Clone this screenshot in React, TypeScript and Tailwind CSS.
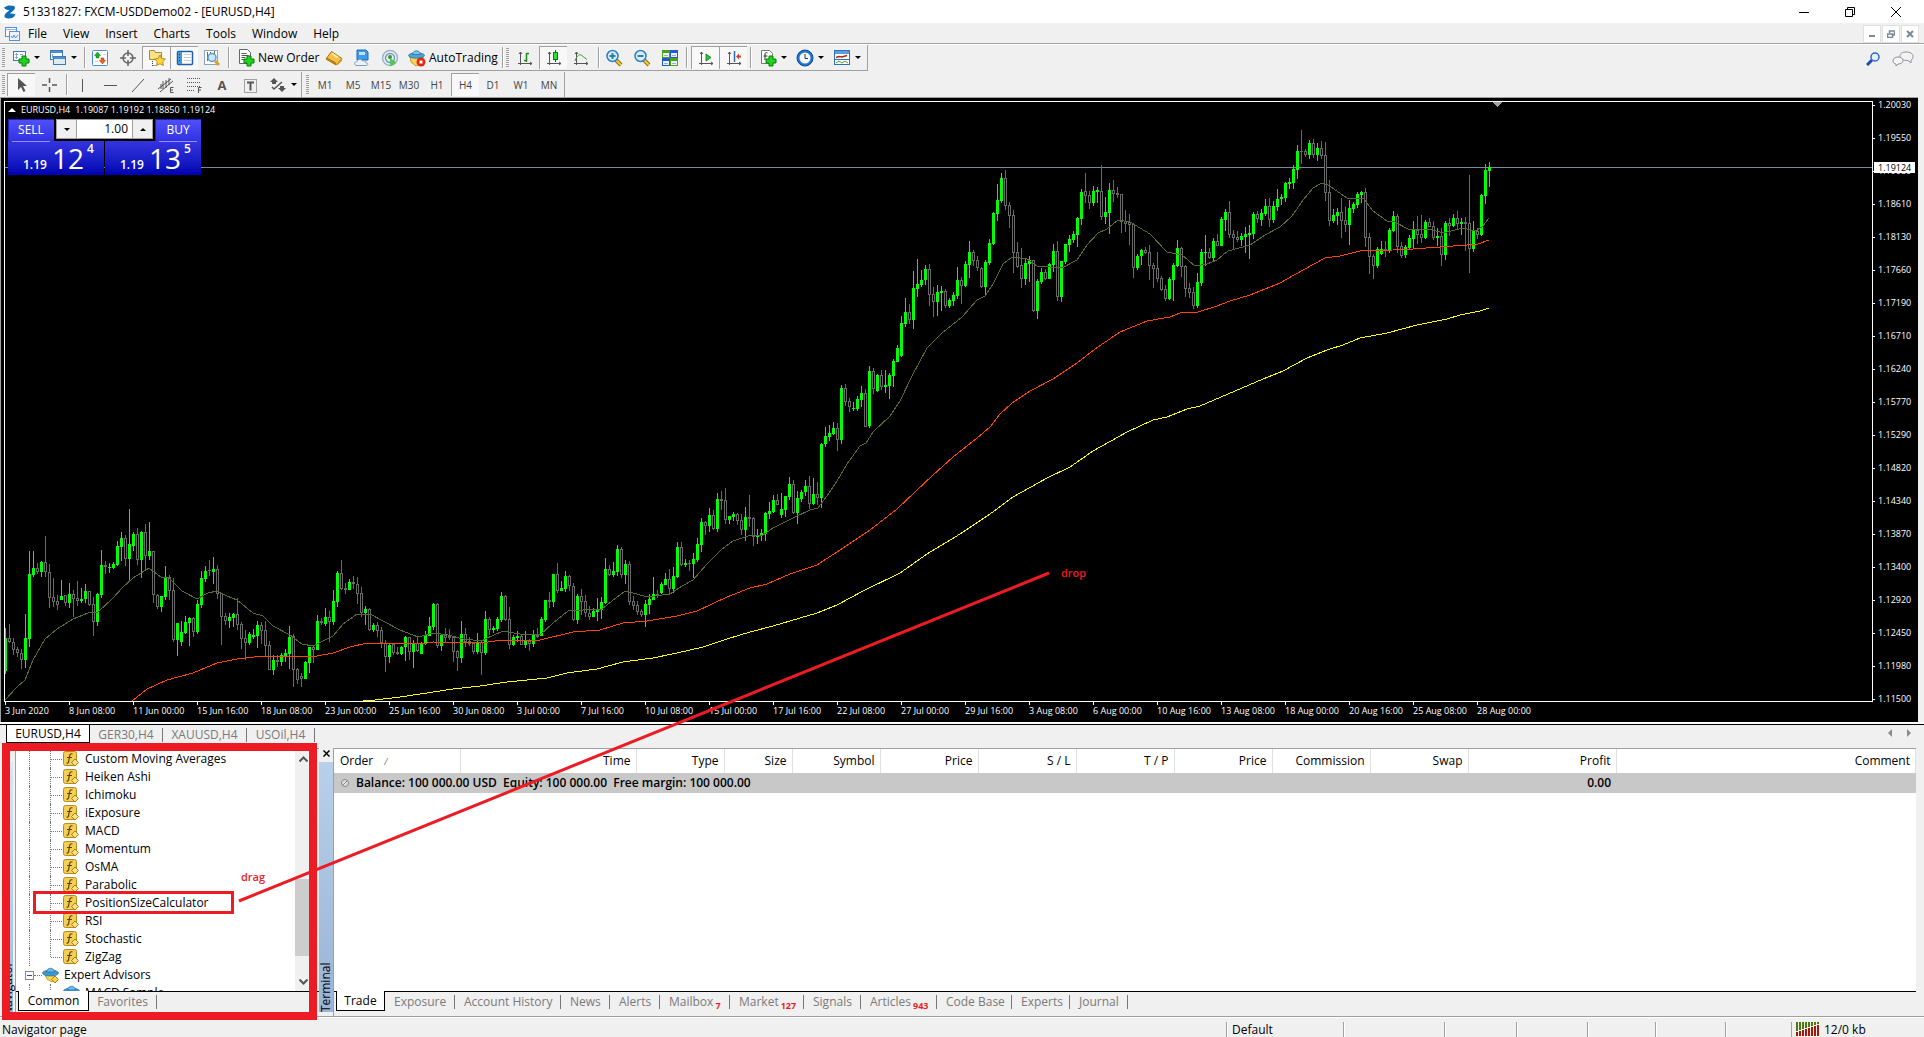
import { ReactNode } from 'react';
import { clsx } from 'clsx';

// [high, low, open, close] measured from the top of the plot area's frame
const candles = [
  [628,674,671,638],[624,643,638,642],[638,655,642,650],[647,657,649,653],[649,669,653,660],[614,668,660,638],
  [551,647,639,574],[551,577,575,568],[563,574,568,572],[561,577,572,562],[536,577,562,572],[564,608,572,598],
  [578,607,597,602],[595,610,601,605],[580,600,600,596],[595,606,595,603],[583,608,603,594],[590,617,594,599],
  [581,606,598,601],[588,603,601,599],[584,603,599,591],[591,606,591,605],[597,636,604,622],[593,626,622,594],
  [550,598,595,565],[561,574,565,567],[563,573,568,567],[562,569,568,564],[541,566,565,546],[532,561,547,538],
  [535,566,538,559],[509,580,559,544],[532,551,546,534],[528,565,534,560],[531,578,560,532],[524,570,532,556],
  [522,560,556,551],[551,603,551,595],[594,609,595,607],[596,612,607,596],[566,600,597,577],[575,600,577,591],
  [578,642,590,640],[623,656,640,623],[621,646,642,632],[616,634,633,622],[617,646,623,618],[617,637,618,632],
  [600,634,632,604],[571,608,605,578],[566,582,579,571],[560,576,570,571],[557,584,572,569],[565,599,569,594],
  [593,645,593,617],[613,625,616,621],[613,628,621,617],[613,627,618,614],[598,630,614,625],[622,649,624,639],
  [630,660,638,643],[632,645,643,634],[629,639,637,635],[621,648,636,625],[622,644,625,631],[621,656,630,646],
  [641,670,645,670],[655,675,670,660],[655,667,660,662],[653,666,662,655],[649,662,657,653],[626,669,654,637],
  [634,687,636,670],[668,684,669,680],[673,687,676,679],[661,679,679,662],[647,673,663,647],[646,663,647,650],
  [615,650,650,621],[618,625,621,623],[608,626,624,617],[611,642,617,622],[590,625,622,601],[571,607,602,573],
  [560,590,573,589],[583,594,588,590],[579,590,590,582],[576,589,582,584],[577,604,584,594],[587,617,593,613],
  [606,625,613,609],[608,631,609,630],[623,632,630,625],[622,637,625,631],[627,648,630,643],[640,672,643,657],
  [643,663,657,645],[643,655,644,653],[647,655,652,654],[646,655,654,647],[636,661,647,637],[637,660,637,652],
  [640,668,652,643],[636,652,643,651],[642,654,654,643],[631,645,644,635],[617,636,636,626],[603,630,627,604],
  [603,648,604,646],[634,651,646,635],[628,642,635,638],[629,640,636,638],[636,662,637,652],[650,671,651,658],
  [621,663,658,634],[628,647,634,642],[637,646,641,644],[643,654,643,652],[633,654,652,643],[640,675,642,653],
  [611,655,653,619],[617,635,619,630],[626,633,630,628],[617,631,629,619],[592,622,620,596],[595,621,596,620],
  [607,649,619,645],[635,646,645,637],[631,642,638,636],[634,645,636,645],[631,648,645,640],[639,651,641,644],
  [630,647,644,635],[628,638,635,637],[617,636,636,619],[600,622,620,600],[592,608,600,602],[574,607,602,574],
  [563,593,574,591],[581,591,591,588],[571,592,589,576],[575,591,576,586],[583,621,586,620],[594,624,620,596],
  [589,615,596,602],[595,617,601,613],[606,620,613,617],[608,617,617,611],[598,621,612,609],[597,619,610,602],
  [558,604,603,569],[565,576,569,575],[562,577,575,571],[545,576,572,549],[547,578,549,575],[560,584,575,564],
  [561,605,564,602],[596,610,601,606],[601,615,605,612],[609,617,611,615],[600,627,615,604],[594,614,605,599],
  [577,600,600,594],[590,598,594,596],[582,594,593,584],[573,585,585,579],[569,594,579,589],[567,593,589,576],
  [542,578,577,547],[542,566,547,565],[559,567,565,563],[560,571,563,564],[553,578,564,559],[538,562,560,544],
  [518,552,545,522],[521,535,522,526],[508,532,526,515],[510,530,515,529],[493,532,529,499],[491,510,499,501],
  [488,524,500,520],[516,524,520,516],[512,521,517,514],[513,525,514,521],[514,535,520,530],[507,541,530,517],
  [495,527,517,519],[517,546,518,537],[529,544,537,535],[529,541,536,533],[512,541,534,513],[502,519,514,511],
  [495,513,512,500],[494,505,500,505],[493,518,515,509],[496,517,510,496],[477,500,497,484],[480,514,484,513],
  [491,524,513,498],[490,502,499,492],[480,496,492,486],[476,509,486,504],[478,505,504,494],[482,505,494,498],
  [443,508,498,444],[427,447,444,436],[425,441,437,433],[422,435,434,428],[423,451,428,440],[385,444,440,388],
  [384,406,388,402],[398,412,401,407],[402,411,409,408],[396,411,409,399],[386,407,400,393],[389,427,393,427],
  [366,428,426,371],[368,394,371,389],[374,392,391,375],[370,390,375,387],[370,393,387,385],[373,399,386,375],
  [359,387,376,361],[345,362,362,348],[316,357,356,323],[298,327,324,312],[304,324,312,320],[271,329,320,288],
  [259,297,289,284],[270,287,285,280],[265,285,280,269],[264,306,269,295],[287,317,294,302],[285,316,302,292],
  [286,311,293,291],[289,308,291,306],[298,308,306,300],[292,306,301,295],[267,299,296,280],[277,304,280,286],
  [261,287,286,264],[241,278,265,252],[250,266,252,261],[256,271,260,268],[267,288,268,287],[260,295,287,262],
  [239,265,263,243],[212,245,244,213],[184,221,214,200],[173,203,201,178],[170,210,178,206],[202,228,205,216],
  [210,273,215,253],[242,268,252,267],[248,288,265,279],[258,285,279,263],[256,282,264,260],[260,312,260,311],
  [279,319,311,281],[268,284,282,272],[269,280,272,279],[263,279,279,264],[244,272,265,251],[241,301,251,297],
  [261,302,297,261],[244,264,262,244],[235,252,245,239],[231,243,240,234],[217,247,235,218],[189,225,219,192],
  [173,203,191,196],[191,209,195,203],[186,206,203,191],[187,203,192,190],[165,220,191,217],[197,224,217,212],
  [183,234,213,190],[180,202,190,194],[187,198,193,195],[194,233,194,222],[210,232,221,224],[214,245,222,225],
  [223,278,224,268],[254,270,268,256],[249,265,256,250],[247,254,250,253],[245,280,252,266],[263,288,265,269],
  [252,282,268,279],[276,291,278,290],[285,301,289,299],[277,300,299,279],[263,301,280,265],[240,267,266,248],
  [247,277,248,267],[265,297,266,289],[283,298,288,293],[287,309,292,306],[273,308,306,282],[249,286,283,252],
  [235,266,253,252],[248,259,252,258],[238,261,258,241],[234,246,241,246],[217,246,246,219],[209,231,220,212],
  [201,238,212,235],[230,250,234,238],[231,242,237,240],[233,246,240,236],[227,253,237,234],[225,259,235,233],
  [212,239,234,214],[211,223,214,219],[209,226,220,213],[199,216,214,206],[198,227,206,220],[201,223,220,206],
  [189,211,207,199],[194,205,199,197],[182,202,198,183],[178,189,184,182],[165,189,183,169],[145,179,170,151],
  [130,164,151,152],[149,157,151,155],[140,159,155,143],[139,158,143,155],[143,161,155,148],[141,159,148,156],
  [142,201,155,193],[180,226,192,221],[209,223,221,215],[208,225,216,212],[198,238,212,221],[207,232,220,225],
  [200,245,225,208],[202,213,209,204],[192,208,205,194],[191,203,195,192],[188,247,192,238],[233,274,237,257],
  [254,279,256,266],[247,268,266,249],[241,255,254,249],[241,257,249,251],[228,253,251,230],[211,232,231,216],
  [214,253,216,247],[242,258,246,256],[245,258,255,247],[235,249,248,238],[221,248,239,230],[216,244,230,235],
  [215,243,234,238],[220,239,238,222],[218,227,222,227],[221,240,226,238],[228,246,238,236],[228,266,236,255],
  [221,260,255,223],[218,236,223,226],[214,227,226,218],[211,229,218,224],[218,235,224,222],[217,251,222,224],
  [175,273,223,249],[221,252,249,231],[228,239,231,235],[194,236,235,195],[164,204,196,170],[162,187,171,167],
];

const fastMa =
  '5,700 17,687 25,680 33,660 45,639 57,629 73,619 88,613 98,612 113,598 123,587 133,578 149,568 161,577 168,577 182,591 197,599 208,593 217,591 227,596 237,600 253,613 263,616 273,626 290,635 302,644 313,646 333,636 343,624 357,614 370,614 383,621 400,630 418,637 433,633 448,635 463,639 482,641 485,639 503,631 520,634 540,635 553,623 568,611 583,610 602,609 612,601 625,591 637,594 647,597 670,594 682,586 693,580 707,564 722,549 733,541 748,536 763,535 773,528 793,518 810,510 818,508 827,496 837,481 847,464 860,446 866,443 873,432 890,416 900,401 913,374 927,348 942,333 962,317 977,300 985,296 993,284 1003,264 1012,257 1027,259 1037,266 1050,267 1062,268 1077,260 1087,245 1098,233 1107,229 1118,220 1130,222 1150,234 1167,252 1182,255 1195,266 1207,264 1217,260 1228,251 1250,245 1265,235 1280,227 1292,216 1303,200 1313,188 1322,183 1328,185 1347,198 1363,198 1373,211 1387,221 1395,222 1408,229 1433,230 1443,233 1463,228 1475,231 1482,227 1489,218';
const midMa =
  '132,701 147,689 167,680 193,673 217,663 237,659 263,656 290,656 303,657 317,656 333,653 350,647 367,643 427,643 433,642 480,643 503,640 540,640 573,632 600,630 623,623 647,621 677,616 697,611 727,597 750,588 767,584 790,574 817,565 840,550 870,530 897,509 933,475 953,457 977,438 990,427 1000,414 1012,403 1030,391 1053,379 1077,363 1095,349 1120,332 1147,321 1170,317 1180,313 1198,312 1217,306 1230,301 1250,295 1280,283 1303,270 1325,258 1340,256 1360,251 1393,250 1413,249 1440,247 1467,245 1478,244 1489,240';
const slowMa =
  '363,701 375,700 400,697 427,693 453,689 480,686 507,682 547,678 567,673 597,669 623,662 653,658 677,653 703,647 727,639 750,632 773,626 817,613 837,605 863,591 900,573 927,554 960,534 990,514 1013,497 1047,478 1070,467 1093,451 1127,432 1153,420 1167,417 1187,409 1200,406 1263,379 1283,371 1307,358 1327,350 1343,345 1360,338 1387,333 1417,325 1447,319 1460,315 1480,311 1489,308';

const prices = [
  '1.20030', '1.19550', '1.19080', '1.18610', '1.18130', '1.17660', '1.17190', '1.16710', '1.16240', '1.15770',
  '1.15290', '1.14820', '1.14340', '1.13870', '1.13400', '1.12920', '1.12450', '1.11980', '1.11500',
];

const times = [
  '3 Jun 2020', '8 Jun 08:00', '11 Jun 00:00', '15 Jun 16:00', '18 Jun 08:00', '23 Jun 00:00', '25 Jun 16:00', '30 Jun 08:00',
  '3 Jul 00:00', '7 Jul 16:00', '10 Jul 08:00', '15 Jul 00:00', '17 Jul 16:00', '22 Jul 08:00', '27 Jul 00:00', '29 Jul 16:00',
  '3 Aug 08:00', '6 Aug 00:00', '10 Aug 16:00', '13 Aug 08:00', '18 Aug 00:00', '20 Aug 16:00', '25 Aug 08:00', '28 Aug 00:00',
];

const indicators = [
  'Custom Moving Averages', 'Heiken Ashi', 'Ichimoku', 'iExposure', 'MACD', 'Momentum', 'OsMA', 'Parabolic',
  'PositionSizeCalculator', 'RSI', 'Stochastic', 'ZigZag',
];

const columns = [
  { label: 'Time', width: 'w-[176px]' },
  { label: 'Type', width: 'w-[88px]' },
  { label: 'Size', width: 'w-[68px]' },
  { label: 'Symbol', width: 'w-[88px]' },
  { label: 'Price', width: 'w-[98px]' },
  { label: 'S / L', width: 'w-[98px]' },
  { label: 'T / P', width: 'w-[98px]' },
  { label: 'Price', width: 'w-[98px]' },
  { label: 'Commission', width: 'w-[98px]' },
  { label: 'Swap', width: 'w-[98px]' },
  { label: 'Profit', width: 'w-[148px]' },
  { label: 'Comment', width: '' },
];

const terminalTabs = [
  { label: 'Exposure', width: 'w-[70px]' },
  { label: 'Account History', width: 'w-[106px]' },
  { label: 'News', width: 'w-[49px]' },
  { label: 'Alerts', width: 'w-[50px]' },
  { label: 'Mailbox', width: 'w-[70px]', count: 7 },
  { label: 'Market', width: 'w-[74px]', count: 127 },
  { label: 'Signals', width: 'w-[57px]' },
  { label: 'Articles', width: 'w-[76px]', count: 943 },
  { label: 'Code Base', width: 'w-[75px]' },
  { label: 'Experts', width: 'w-[58px]' },
  { label: 'Journal', width: 'w-[58px]' },
];

const Svg = ({ children, w = 18, h = 18 }: { children: ReactNode; w?: number; h?: number }) => (
  <svg width={w} height={h} viewBox={`0 0 ${w} ${h}`} fill="none" className="shrink-0">
    {children}
  </svg>
);

const Plus = () => (
  <path d="M10 7h4v3h3v4h-3v3h-4v-3H7v-4h3z" fill="#1fd41f" stroke="#0a7a0a" />
);

const Axes = () => (
  <path d="M4.500 3v13M2 14.500h14M3 5l1.500-2L6 5M14 13l2 1.500-2 1.500" stroke="#555" />
);

const Lens = ({ minus }: { minus?: boolean }) => (
  <Svg>
    <path d="M11 11l5 5" stroke="#8a6a10" strokeWidth="4" />
    <path d="M11 11l5 5" stroke="#f2cf3a" strokeWidth="2" />
    <circle cx="7.500" cy="7" r="5.500" fill="#d6eefc" stroke="#2f7fc4" strokeWidth="1.500" />
    <path d={minus ? 'M4.500 7h6' : 'M4.500 7h6M7.500 4v6'} stroke="#2f7fa8" strokeWidth="2" />
  </Svg>
);

const icons: Record<string, ReactNode> = {
  newChart: (
    <Svg>
      <rect x="1.500" y="2.500" width="12" height="9" fill="#fff" stroke="#3d78b8" />
      <path d="M4.500 4v6M3 8.500h3M3 5.500h3M8 5.500h3" stroke="#7aa7d6" />
      <Plus />
    </Svg>
  ),
  profiles: (
    <Svg>
      <rect x="1.500" y="1.500" width="12" height="9" fill="#fff" stroke="#3d78b8" />
      <path d="M2 3h11" stroke="#4c8fd6" strokeWidth="2" />
      <path d="M3.500 5v4M3 7.500h1.500" stroke="#7aa7d6" />
      <rect x="4.500" y="7.500" width="12" height="8" fill="#dcebf9" stroke="#3d78b8" />
      <path d="M5 9h11" stroke="#4c8fd6" strokeWidth="2" />
    </Svg>
  ),
  marketWatch: (
    <Svg>
      <rect x="1.500" y="1.500" width="15" height="15" rx="1" fill="#fff" stroke="#4c8fd6" />
      <path d="M4 5.500h3M4 12.500h3M12 5.500h3" stroke="#cfd8e0" />
      <path d="M6.500 3l3 3.500H8V9H5V6.500H3.500z" fill="#1fb41f" stroke="#0a7a0a" strokeWidth=".5" />
      <path d="M11.500 15l-3-3.500H10V9h3v2.500h1.500z" fill="#f0602a" stroke="#a83208" strokeWidth=".5" />
    </Svg>
  ),
  target: (
    <Svg>
      <circle cx="9" cy="9" r="5" stroke="#666" strokeWidth="1.500" />
      <path d="M9 1v6M9 11v6M1 9h6M11 9h6" stroke="#666" strokeWidth="1.500" />
    </Svg>
  ),
  favorites: (
    <Svg>
      <path d="M1.500 1.500h5l1 2h6v7h-12z" fill="#f7e08a" stroke="#b08a1a" />
      <path d="M4.500 12v5M4.500 16.500h4" stroke="#444" strokeDasharray="1 1" />
      <path d="M12 6l1.700 3.500 3.800.500-2.800 2.700.7 3.800L12 14.700l-3.400 1.800.7-3.800L6.500 10l3.800-.5z" fill="#ffd83a" stroke="#a8780a" strokeWidth=".8" />
    </Svg>
  ),
  navigator: (
    <Svg>
      <rect x="1.500" y="2.500" width="15" height="13" rx="1" fill="#fff" stroke="#1d5fa8" strokeWidth="1.500" />
      <rect x="2" y="3" width="4" height="12" fill="#4c97dc" />
      <path d="M8 5.500h7M8 8.500h7M8 11.500h7" stroke="#c2cfdb" />
      <path d="M3 5.500h1M3 8.500h1M3 11.500h1" stroke="#103c70" />
    </Svg>
  ),
  tester: (
    <Svg>
      <rect x="1.500" y="1.500" width="13" height="14" fill="#fff" stroke="#8fa4b8" />
      <path d="M4.500 3v9M7.500 3v3M11.500 2v4" stroke="#5a6f85" />
      <circle cx="9" cy="8.500" r="4" fill="#cfe6f7" stroke="#5a9bd0" strokeWidth="1.500" />
      <path d="M12 12l4 4" stroke="#d8a52a" strokeWidth="3" />
    </Svg>
  ),
  newOrder: (
    <Svg>
      <path d="M2.500.500h8l3 3v11h-11z" fill="#fff" stroke="#666" />
      <path d="M4.500 4.500h5M4.500 6.500h7M4.500 8.500h4M4.500 10.500h3" stroke="#555" />
      <Plus />
    </Svg>
  ),
  book: (
    <Svg>
      <path d="M1 10l5.500-7.500L17 9.500 11 16z" fill="#f2c14a" stroke="#a87410" />
      <path d="M1 10l10 6v-2.500L2 8.500z" fill="#b87d12" />
      <path d="M11 15.500l6-6v2.500l-5 4.500z" fill="#d89a20" />
      <path d="M7 4.500l6 4" stroke="#fbe7a6" strokeWidth="2" />
    </Svg>
  ),
  server: (
    <Svg>
      <path d="M4 1h9l2 2v8H4z" fill="#3f9ae8" stroke="#1c6cb8" />
      <path d="M6 3h6v3H6z" fill="#bfe0fa" />
      <path d="M3 16.500c-2-1-1.500-4 1-4 .5-2.500 4.500-3 5.500-.500 2-1 4 .500 3.500 2 2 0 2.500 2 .5 2.500z" fill="#eaf2f9" stroke="#7f9cba" />
    </Svg>
  ),
  signal: (
    <Svg>
      <circle cx="9" cy="9" r="7.500" stroke="#9bb4c8" strokeWidth="1.500" />
      <circle cx="9" cy="9" r="4.500" stroke="#6f9ac0" strokeWidth="1.500" />
      <path d="M9 9v8a8 8 0 006-4z" fill="#56c456" />
      <circle cx="9" cy="8" r="2" fill="#2d9b3c" />
    </Svg>
  ),
  auto: (
    <Svg>
      <path d="M2 8h13l-2 6-5 3-5-4z" fill="#f6d45a" stroke="#b08a1a" strokeWidth=".8" />
      <ellipse cx="8.500" cy="6.500" rx="8" ry="2.800" fill="#4ba3d8" stroke="#226c9c" strokeWidth=".7" />
      <path d="M4.500 5.500C5 .500 12 .500 12.500 5.500z" fill="#7cc4ec" stroke="#226c9c" strokeWidth=".7" />
      <circle cx="13" cy="13" r="4.500" fill="#e02a10" />
      <rect x="11.500" y="11.500" width="3" height="3" fill="#fff" />
    </Svg>
  ),
  bars: (
    <Svg>
      <Axes />
      <path d="M10.500 4v9M10.500 4.500H13M8 11.500h2.500" stroke="#1e8a1e" strokeWidth="1.500" />
    </Svg>
  ),
  candlesticks: (
    <Svg>
      <Axes />
      <path d="M10.500 1v12" stroke="#0a6a0a" />
      <rect x="8.500" y="3.500" width="4" height="7" fill="#2adf3a" stroke="#0a7a0a" />
    </Svg>
  ),
  line: (
    <Svg>
      <Axes />
      <path d="M3 12C5 6 8 4 11 7.500l4 3" stroke="#3aa03a" />
    </Svg>
  ),
  zoomIn: <Lens />,
  zoomOut: <Lens minus />,
  tile: (
    <Svg>
      <rect x="1" y="1" width="8" height="8" fill="#4aa312" />
      <rect x="9" y="1" width="8" height="8" fill="#2458d0" />
      <rect x="1" y="9" width="8" height="8" fill="#2458d0" />
      <rect x="9" y="9" width="8" height="8" fill="#4aa312" />
      <path d="M2 4h6v4H2zM10 4h6v4h-6zM2 12h6v4H2zM10 12h6v4h-6z" fill="#eaf3fb" />
      <path d="M3 6.500h4M11 6.500h4M3 14.500h4M11 14.500h4" stroke="#8fb0d8" />
    </Svg>
  ),
  scroll: (
    <Svg>
      <Axes />
      <path d="M9 5l5 3.500L9 12z" fill="#2ac43a" stroke="#0a7a0a" strokeWidth=".8" />
    </Svg>
  ),
  shift: (
    <Svg>
      <Axes />
      <path d="M9.500 2v11" stroke="#2a6aa8" strokeWidth="1.500" />
      <path d="M11 7.500l3-3v2h2v2h-2v2z" fill="#c8461a" />
    </Svg>
  ),
  indicators: (
    <Svg>
      <path d="M2.500 1.500h8l3 3v10h-11z" fill="#fff" stroke="#777" />
      <path d="M8.500 4c-2-1-2.500 0-2.500 2v5M4.500 7h4" stroke="#333" />
      <Plus />
    </Svg>
  ),
  clock: (
    <Svg>
      <circle cx="9" cy="9" r="8" fill="#1f74d0" stroke="#0f4a94" />
      <circle cx="9" cy="9" r="5.500" fill="#f4f8fc" />
      <path d="M9 5v4.500h3" stroke="#333" />
    </Svg>
  ),
  templates: (
    <Svg>
      <rect x="1.500" y="1.500" width="15" height="14" fill="#fff" stroke="#2f6fb4" />
      <rect x="2" y="2" width="14" height="3" fill="#5a9fe0" />
      <path d="M3 8.500l3-1 3 .5 5-1.500" stroke="#a02818" strokeWidth="1.500" />
      <path d="M2 10.500h14" stroke="#2f6fb4" />
      <path d="M3 14l3-2 3 2 3-2 3 2" stroke="#3aa03a" />
    </Svg>
  ),
  cursor: (
    <Svg>
      <path d="M5 2v12l3-3 2.500 5 2-1-2.500-5h4z" fill="#555" />
    </Svg>
  ),
  crosshair: (
    <Svg>
      <path d="M9.500 2v5M9.500 11v5M2 9h5M12 9h5" stroke="#555" strokeWidth="1.500" />
    </Svg>
  ),
  vline: (
    <Svg>
      <path d="M9.500 3v13" stroke="#555" />
    </Svg>
  ),
  hline: (
    <Svg>
      <path d="M3 9.500h13" stroke="#555" />
    </Svg>
  ),
  trend: (
    <Svg>
      <path d="M3 16L15 3" stroke="#555" />
    </Svg>
  ),
  channel: (
    <Svg>
      <path d="M1 13L14 3M3 16L16 5M4 8v5M6 5v8M9 4v8M12 2v7" stroke="#555" />
      <path d="M16.500 11.500h-3v5h3M13.500 14h2.500" stroke="#555" />
    </Svg>
  ),
  fibo: (
    <Svg>
      <path d="M2 2.500h14M2 6.500h14M2 10.500h14M2 14.500h8" stroke="#555" strokeDasharray="1 1" />
      <path d="M16.500 11.500h-3V17M13.500 14h2.500" stroke="#555" />
    </Svg>
  ),
  label: (
    <Svg>
      <rect x="3.500" y="3.500" width="12" height="13" stroke="#555" strokeDasharray="1 1" />
      <path d="M6 6.500h7M9.500 6.500v8" stroke="#555" strokeWidth="2" />
    </Svg>
  ),
  arrows: (
    <Svg>
      <path d="M5 2l4 4H7v2H3V6H1zM13 16l-4-4h2v-2h4v2h2z" fill="#555" />
      <path d="M3 11l2 2 8-7" stroke="#555" strokeWidth="1.500" />
    </Svg>
  ),
};

const Separator = () => <span className="h-[21px] w-[2px] shrink-0 border-l border-[#a0a0a0] bg-white" />;

const Grip = () => (
  <span className="flex h-full w-[7px] shrink-0 items-center pl-[2px]">
    <span className="h-5 w-[3px] bg-[repeating-linear-gradient(#a0a0a0_0_1px,#f0f0f0_1px_2px)]" />
  </span>
);

const Tool = ({ name, pressed, menu, children }: { name: string; pressed?: boolean; menu?: boolean; children?: ReactNode }) => (
  <button
    aria-label={name}
    aria-pressed={pressed}
    className={clsx(
      'flex h-[23px] shrink-0 items-center justify-center',
      menu ? 'w-[37px] gap-[4px]' : 'w-7',
      pressed && 'border-l border-t border-[#a0a0a0] bg-[#f8f8f8]',
    )}
  >
    {children ?? icons[name]}
    {menu && <span className="border-x-[3px] border-t-[3px] border-x-transparent border-t-black" />}
  </button>
);

const TitleBar = () => (
  <header className="flex h-[23px] shrink-0 items-center bg-white pl-[3px] pr-[5px]">
    <Svg w={14} h={14}>
      <path d="M1 2.500C4 0 8 0 11 1c1.500 1 1 3 0 4L7 8.500c2 0 4 0 5.500 1-1.500 3-4 4-6.500 4-3 0-5-1-4.500-3C2 8 5 7 6.500 5 4 5 2 4.500 1 2.500z" fill="#0f6fb8" />
    </Svg>
    <h1 className="pl-[6px]">51331827: FXCM-USDDemo02 - [EURUSD,H4]</h1>
    <div className="ml-auto flex">
      <button aria-label="Minimize" className="flex h-[23px] w-[46px] items-center justify-center">
        <Svg w={10} h={10}><path d="M0 5.500h10" stroke="#000" /></Svg>
      </button>
      <button aria-label="Restore" className="flex h-[23px] w-[46px] items-center justify-center">
        <Svg w={10} h={10}><path d="M.5 2.500h7v7h-7zM2.500 2.500v-2h7v7h-2" stroke="#000" /></Svg>
      </button>
      <button aria-label="Close" className="flex h-[23px] w-[46px] items-center justify-center">
        <Svg w={10} h={10}><path d="M0 0l10 10M10 0L0 10" stroke="#000" /></Svg>
      </button>
    </div>
  </header>
);

const MenuBar = () => (
  <nav className="flex h-[22px] shrink-0 items-center border-b border-white pl-[5px] shadow-[inset_0_-1px_0_#a0a0a0]">
    <Svg w={15} h={14}>
      <rect x=".5" y=".5" width="11" height="9" fill="#fff" stroke="#5a8fd8" />
      <path d="M1 2.500h10" stroke="#8fb6ec" />
      <rect x="4.500" y="4.500" width="10" height="9" fill="#eaf2fd" stroke="#5a8fd8" />
      <path d="M6 9l1.500 2L9 8l1.500 3L13 8" stroke="#5a8fd8" />
    </Svg>
    <div className="flex gap-4 pl-2">
      {['File', 'View', 'Insert', 'Charts', 'Tools', 'Window', 'Help'].map((item) => (
        <button key={item}>{item}</button>
      ))}
    </div>
    <div className="ml-auto flex gap-px pr-[5px]">
      <button aria-label="Minimize chart" className="flex size-[18px] items-center justify-center border border-[#e0e0e0] bg-white">
        <Svg w={8} h={8}><path d="M1 6h6" stroke="#7a8899" strokeWidth="2" /></Svg>
      </button>
      <button aria-label="Restore chart" className="flex size-[18px] items-center justify-center border border-[#e0e0e0] bg-white">
        <Svg w={8} h={8}><path d="M.5 4h5v3.500h-5zM2.500 3V1h5v4H6" stroke="#7a8899" strokeWidth="1.500" /></Svg>
      </button>
      <button aria-label="Close chart" className="flex size-[18px] items-center justify-center border border-[#e0e0e0] bg-white">
        <Svg w={8} h={8}><path d="M1 1l6 6M7 1L1 7" stroke="#7a8899" strokeWidth="2" /></Svg>
      </button>
    </div>
  </nav>
);

const Toolbars = () => (
  <div className="shrink-0">
    <div className="flex h-[27px]">
      <div className="flex h-[26px] items-center border-b border-[#a0a0a0]">
        <Grip />
        <Tool name="newChart" menu />
        <Tool name="profiles" menu />
        <span className="w-[3px]" />
        <Separator />
        <Tool name="marketWatch" />
        <Tool name="target" />
        <Tool name="favorites" pressed />
        <Tool name="navigator" pressed />
        <Tool name="tester" />
        <span className="w-[2px]" />
        <Separator />
        <button className="flex h-[23px] w-[90px] items-center gap-[3px] pl-[7px]">
          {icons.newOrder}New Order
        </button>
        <Tool name="book" />
        <Tool name="server" />
        <Tool name="signal" />
        <button className="flex h-[23px] w-[98px] items-center gap-[3px] pl-[4px]">
          {icons.auto}AutoTrading
        </button>
        <Separator />
        <Grip />
        <Tool name="bars" />
        <Tool name="candlesticks" pressed />
        <Tool name="line" />
        <span className="w-[3px]" />
        <Separator />
        <Tool name="zoomIn" />
        <Tool name="zoomOut" />
        <Tool name="tile" />
        <span className="w-[2px]" />
        <Separator />
        <span className="w-[3px]" />
        <Tool name="scroll" pressed />
        <Tool name="shift" pressed />
        <span className="w-[3px]" />
        <Separator />
        <span className="w-[2px]" />
        <Tool name="indicators" menu />
        <Tool name="clock" menu />
        <Tool name="templates" menu />
        <span className="h-full w-[3px] border-r border-[#a0a0a0]" />
      </div>
      <div className="ml-auto flex items-center gap-3 pr-[10px]">
        <button aria-label="Search">
          <Svg w={14} h={14}>
            <path d="M1 13l5-5" stroke="#1d48b8" strokeWidth="3" />
            <circle cx="9" cy="5" r="4" fill="#e4f0fd" stroke="#2f66d8" strokeWidth="1.500" />
          </Svg>
        </button>
        <button aria-label="Community">
          <Svg w={22} h={16}>
            <path d="M14 1c4 0 7 1.500 7 4.500 0 2-1 3-2 3.500v3l-3-2.500c-5 0-8-1-8-4S10 1 14 1z" fill="#f2f2f4" stroke="#8f8f96" />
            <path d="M6 6c3 0 5 1.500 5 3.500S9 13 6 13l-2 2v-2c-2-.5-3-1.500-3-3C1 7.500 3 6 6 6z" fill="#f8f8fa" stroke="#8f8f96" />
          </Svg>
        </button>
      </div>
    </div>
    <div className="flex h-[25px] items-center text-[10px] text-[#444]">
      <Grip />
      <Tool name="cursor" pressed />
      <Tool name="crosshair" />
      <span className="w-[3px]" />
      <Separator />
      <Tool name="vline" />
      <Tool name="hline" />
      <Tool name="trend" />
      <Tool name="channel" />
      <Tool name="fibo" />
      <Tool name="Text"><span className="text-[13px] font-bold text-[#555]">A</span></Tool>
      <Tool name="label" />
      <Tool name="arrows" menu />
      <span className="h-full w-px bg-[#a0a0a0]" />
      <span className="w-[2px]" />
      <Grip />
      {['M1', 'M5', 'M15', 'M30', 'H1', 'H4', 'D1', 'W1', 'MN'].map((p) => (
        <Tool key={p} name={p} pressed={p === 'H4'}>{p}</Tool>
      ))}
      <span className="h-full w-[2px] border-r border-[#a0a0a0]" />
    </div>
  </div>
);

const OneClick = () => (
  <div className="absolute left-[3px] top-[17px] w-[193px] text-[12px] text-white">
    <div className="flex h-[22px] justify-between">
      <button className="h-full w-[46px] bg-gradient-to-b from-[#5050ff] to-[#3232e0] shadow-[inset_1px_1px_0_#2020b8]">SELL</button>
      <div className="flex h-5 w-[97px] border border-[#a0a0a0] bg-white text-black">
        <button aria-label="Decrease volume" className="flex w-5 items-center justify-center border-r border-[#a0a0a0] bg-[#f0f0f0]">
          <span className="border-x-[3px] border-t-[3px] border-x-transparent border-t-black" />
        </button>
        <input aria-label="Volume" defaultValue="1.00" className="w-0 flex-1 pr-1 text-right outline-none" />
        <button aria-label="Increase volume" className="flex w-5 items-center justify-center border-l border-[#a0a0a0] bg-[#f0f0f0]">
          <span className="border-x-[3px] border-b-[3px] border-x-transparent border-b-black" />
        </button>
      </div>
      <button className="h-full w-[46px] bg-gradient-to-b from-[#5050ff] to-[#3232e0] shadow-[inset_1px_1px_0_#2020b8]">BUY</button>
    </div>
    <div className="flex h-[34px] justify-between">
      {[['12', '4'], ['13', '5']].map(([big, pip], i) => (
        <div key={big} className="relative flex h-full w-[96px] bg-gradient-to-b from-[#3434e0] to-[#0000b0] pl-[15px]">
          <span className={clsx('absolute top-0 h-px w-[38px] bg-[#9090ff]', i ? 'right-1' : 'left-1')} />
          <span className="self-end pb-[2px] font-semibold leading-4">1.19</span>
          <span className="pl-[5px] text-[28px] leading-[34px]">{big}</span>
          <span className="pl-[3px] font-semibold leading-4">{pip}</span>
        </div>
      ))}
    </div>
  </div>
);

const Plot = () => (
  <svg viewBox="5 102 1867 599" preserveAspectRatio="none" shapeRendering="crispEdges" className="absolute inset-0 h-full w-full">
    <path d="M5 167.500H1872" stroke="#778899" />
    {candles.map(([high, low, open, close], i) => {
      const x = 5 + i * 4;
      const top = Math.min(open, close);
      const size = Math.max(Math.abs(open - close), 1);
      return close < open ? (
        <g key={i} fill="#00ff00">
          <rect x={x} y={high} width="1" height={low - high} />
          <rect x={x - 1} y={top} width="3" height={size} />
        </g>
      ) : (
        <g key={i} fill="#696969">
          <rect x={x} y={high} width="1" height={low - high} />
          <rect x={x - 1} y={top} width="3" height={size} />
          {size > 2 && <rect x={x} y={top + 1} width="1" height={size - 2} fill="#000" />}
        </g>
      );
    })}
    <polyline points={fastMa} fill="none" stroke="#556b2f" />
    <polyline points={midMa} fill="none" stroke="#ff4500" />
    <polyline points={slowMa} fill="none" stroke="#ffff00" />
    <path d="M1492 102h10l-5 5z" fill="#a0a0a0" />
  </svg>
);

const Chart = () => (
  <section className="flex min-h-[300px] flex-1 border-b-2 border-b-white bg-black text-[9px] text-white">
    <div className="flex flex-1 flex-col border-l border-t border-[#a0a0a0]">
      <div className="flex flex-1">
        <div className="relative ml-[3px] mt-[3px] flex-1 border border-white">
          <Plot />
          <div className="absolute left-[3px] top-[2px] flex items-center gap-[5px] leading-3">
            <span className="border-x-4 border-b-4 border-x-transparent border-b-white" />
            <span>EURUSD,H4</span>
            <span>1.19087 1.19192 1.18850 1.19124</span>
          </div>
          <OneClick />
        </div>
        <div className="relative -mb-[2px] flex w-[45px] flex-col justify-between pt-[2px]">
          {prices.map((price) => (
            <div key={price} className="flex h-[10px] items-center gap-[3px] leading-[10px]">
              <span className="h-px w-[2px] bg-white" />
              {price}
            </div>
          ))}
          <div className="absolute left-px top-[64px] h-[11px] w-[41px] bg-white pl-1 leading-[11px] text-black">1.19124</div>
        </div>
      </div>
      <div className="flex h-[20px] overflow-hidden pl-[4px]">
        {times.map((time) => (
          <div key={time} className="w-16 shrink-0 whitespace-nowrap leading-3">
            <span className="block h-[3px] w-px bg-white" />
            {time}
          </div>
        ))}
      </div>
    </div>
    <div className="w-[6px] bg-[#f0f0f0]" />
  </section>
);

const ChartTabs = () => (
  <div className="flex h-5 shrink-0 items-start border-t border-black text-[#7a7a7a]">
    <button className="ml-[6px] h-[18px] w-[84px] border-x border-b border-black bg-white leading-4 text-black">EURUSD,H4</button>
    {[['GER30,H4', 'w-[73px]'], ['XAUUSD,H4', 'w-[84px]'], ['USOil,H4', 'w-[68px]']].map(([tab, width]) => (
      <button key={tab} className={clsx('mt-[3px] h-[14px] border-r border-[#777] leading-[14px]', width)}>{tab}</button>
    ))}
    <div className="ml-auto flex gap-[15px] pr-[13px] pt-[4px]">
      <button aria-label="Scroll tabs left" className="h-2 border-y-4 border-r-4 border-y-transparent border-r-[#8a8a8a]" />
      <button aria-label="Scroll tabs right" className="h-2 border-y-4 border-l-4 border-y-transparent border-l-[#8a8a8a]" />
    </div>
  </div>
);

const IndicatorIcon = () => (
  <Svg w={16} h={16}>
    <rect x=".5" y=".5" width="13" height="14" rx="2" fill="#f4cf55" stroke="#b88a1c" />
    <path d="M9.500 3c-2-.8-2.600.3-3 2.500L5.500 11c-.3 1-1 1.300-2 1M4 6.500h5" stroke="#5c430a" strokeWidth="1.200" />
    <path d="M12 8l3.500 3.500L12 15l-3.500-3.500z" fill="#fbe27c" stroke="#b07d10" />
  </Svg>
);

const ExpertIcon = () => (
  <Svg w={17} h={17}>
    <path d="M3 8h9l1 4-3 3-5-3z" fill="#f6d45a" stroke="#b08a1a" strokeWidth=".8" />
    <ellipse cx="8.500" cy="6" rx="8" ry="3" fill="#3f97d0" stroke="#226c9c" strokeWidth=".7" />
    <path d="M4.500 5C5 0 12 0 12.500 5z" fill="#6cbcea" stroke="#226c9c" strokeWidth=".7" />
    <path d="M13 9l3.500 3.500L13 16l-3.500-3.500z" fill="#fbd24a" stroke="#b07d10" />
  </Svg>
);

const Navigator = () => (
  <aside className="flex w-[319px] shrink-0 pl-[2px]">
    <div className="flex w-[11px] flex-col pt-[18px]">
      <div className="flex flex-1 rotate-180 items-center bg-gradient-to-t from-[#dce8f5] to-[#9cb8da] leading-[11px] [writing-mode:vertical-rl]">Navigator</div>
    </div>
    <div className="mb-[4px] ml-[2px] mt-[4px] flex flex-1 flex-col border-l border-t border-[#a0a0a0]">
      <div className="flex h-0 flex-1 bg-white">
        <ul className="flex-1 overflow-hidden pl-[13px] pt-px">
          {indicators.map((name, i) => (
            <li key={name} className="flex h-[18px] items-center border-l border-dotted border-[#777] pl-5">
              <span className={clsx('border-dotted border-[#777] border-l', i === indicators.length - 1 ? 'h-[9px] self-start' : 'h-full')} />
              <span className="w-[11px] border-t border-dotted border-[#777]" />
              <span className="w-[23px] pl-px"><IndicatorIcon /></span>
              {name}
            </li>
          ))}
          <li className="flex h-[18px] items-center">
            <button aria-label="Collapse Expert Advisors" className="-ml-1 flex size-[9px] items-center justify-center border border-[#8a8a8a] bg-white">
              <span className="h-px w-[5px] bg-[#2a4aa0]" />
            </button>
            <span className="w-2 border-t border-dotted border-[#777]" />
            <span className="w-[22px]"><ExpertIcon /></span>
            Expert Advisors
          </li>
          <li className="flex h-[18px] items-center border-l border-dotted border-[#777] pl-5">
            <span className="h-full w-[13px] border-l border-dotted border-[#777]" />
            <span className="w-[22px]"><ExpertIcon /></span>
            MACD Sample
          </li>
        </ul>
        <div className="flex w-[24px] flex-col items-center bg-[#f0f0f0] pr-[7px]">
          <span className="flex h-5 items-center">
            <Svg w={9} h={6}><path d="M.5 5.500l4-4 4 4" stroke="#555" strokeWidth="2" /></Svg>
          </span>
          <span className="mt-[110px] h-[77px] w-[17px] bg-[#cdcdcd]" />
          <span className="mt-auto flex h-[18px] items-center">
            <Svg w={9} h={6}><path d="M.5.500l4 4 4-4" stroke="#555" strokeWidth="2" /></Svg>
          </span>
        </div>
      </div>
      <div className="flex h-[21px] items-start border-t border-black text-[#7a7a7a]">
        <button className="-mt-px ml-[2px] h-5 w-[71px] border-x border-b border-black bg-white text-black">Common</button>
        <button className="mt-[3px] h-[14px] w-[68px] border-r border-[#777] leading-[14px]">Favorites</button>
      </div>
    </div>
  </aside>
);

const Terminal = () => (
  <section className="flex min-w-0 flex-1">
    <div className="flex w-[14px] flex-col">
      <button aria-label="Close terminal" className="flex h-[18px] items-center justify-center">
        <Svg w={7} h={7}><path d="M.5.500l6 6M6.500.500l-6 6" stroke="#000" strokeWidth="1.500" /></Svg>
      </button>
      <div className="mb-1 flex flex-1 rotate-180 items-center bg-gradient-to-t from-[#b8d0ea] to-[#9ab4d6] leading-[14px] [writing-mode:vertical-rl]">Terminal</div>
    </div>
    <div className="mr-2 mt-[4px] flex min-w-0 flex-1 flex-col border-l border-t border-[#a0a0a0]">
      <div className="flex-1 bg-white">
        <table className="w-full table-fixed">
          <thead>
            <tr className="h-6">
              <th className="w-[126px] border-r border-[#e0e0e0] pl-[6px] text-left font-normal">
                Order <span className="pl-2 text-[9px] italic text-[#777]">/</span>
              </th>
              {columns.map(({ label, width }, i) => (
                <th key={i} className={clsx('border-r border-[#e0e0e0] pr-[5px] text-right font-normal', width)}>{label}</th>
              ))}
            </tr>
          </thead>
          <tbody>
            <tr className="h-5 bg-[#c8c8c8] font-semibold">
              <td colSpan={11} className="pl-[7px]">
                <span className="flex items-center gap-[7px] whitespace-pre">
                  <Svg w={8} h={8}>
                    <circle cx="4" cy="4" r="3.500" fill="#ddd" stroke="#888" />
                    <path d="M2 6l4-4" stroke="#888" />
                  </Svg>
                  {'Balance: 100 000.00 USD  Equity: 100 000.00  Free margin: 100 000.00'}
                </span>
              </td>
              <td className="pr-[5px] text-right">0.00</td>
              <td />
            </tr>
          </tbody>
        </table>
      </div>
      <div className="flex h-[25px] items-start border-t border-black text-[#7a7a7a]">
        <button className="-mt-px ml-[2px] h-5 w-[49px] border-x border-b border-black bg-white text-black">Trade</button>
        {terminalTabs.map(({ label, width, count }) => (
          <button key={label} className={clsx('mt-[3px] flex h-[14px] border-r border-[#777] pl-[9px] leading-[14px] whitespace-nowrap', width)}>
            {label}
            {count && <span className="self-end pl-[2px] text-[9px] font-bold leading-[6px] text-[#ed1c24]">{count}</span>}
          </button>
        ))}
      </div>
    </div>
  </section>
);

const Annotations = () => (
  <div className="pointer-events-none absolute inset-0 font-semibold text-[#ed1c24]">
    <div className="absolute -top-px left-[2px] h-[277px] w-[315px] border-8 border-[#ed1c24]" />
    <div className="absolute left-[33px] top-[147px] h-[23px] w-[201px] border-[3px] border-[#ed1c24]" />
    <svg className="absolute left-0 top-0 overflow-visible" width="1" height="1">
      <path d="M239 157L1049-171" stroke="#ed1c24" strokeWidth="3" />
    </svg>
    <span className="absolute left-[241px] top-[125px] text-[11px] leading-4">drag</span>
    <span className="absolute left-[1061px] top-[-179px] text-[11px] leading-4">drop</span>
  </div>
);

const StatusBar = () => (
  <footer className="flex h-[21px] shrink-0 border-t border-[#a0a0a0] pt-px shadow-[inset_0_1px_0_#fff]">
    <span className="flex-1 pl-[2px] leading-[24px]">Navigator page</span>
    {['w-[117px]', 'w-[101px]', 'w-[72px]', 'w-[71px]', 'w-[68px]', 'w-[70px]', 'w-[66px]'].map((width, i) => (
      <span key={i} className={clsx('mt-1 border-l border-[#a0a0a0] pl-[5px] leading-4 shadow-[inset_1px_0_0_#fff]', width)}>
        {i === 0 && 'Default'}
      </span>
    ))}
    <span className="mt-1 flex w-[133px] gap-[4px] border-l border-[#a0a0a0] pl-1 leading-4">
      <Svg w={24} h={14}>
        {[0, 1, 2, 3, 4, 5, 6, 7].map((i) => (
          <g key={i}>
            <rect x={i * 3} y="0" width="2" height={9 - i} fill="#4e7a0c" />
            <rect x={i * 3} y={10 - i} width="2" height={4 + i} fill="#a01808" />
          </g>
        ))}
      </Svg>
      12/0 kb
    </span>
  </footer>
);

const App = () => (
  <div className="flex min-h-screen flex-col overflow-hidden bg-[#f0f0f0] font-['Open_Sans','Noto_Sans',sans-serif] text-[12px] leading-4 text-black">
    <TitleBar />
    <MenuBar />
    <Toolbars />
    <Chart />
    <ChartTabs />
    <div className="relative flex h-[272px] shrink-0">
      <Navigator />
      <Terminal />
      <Annotations />
    </div>
    <StatusBar />
  </div>
);

export default App;
